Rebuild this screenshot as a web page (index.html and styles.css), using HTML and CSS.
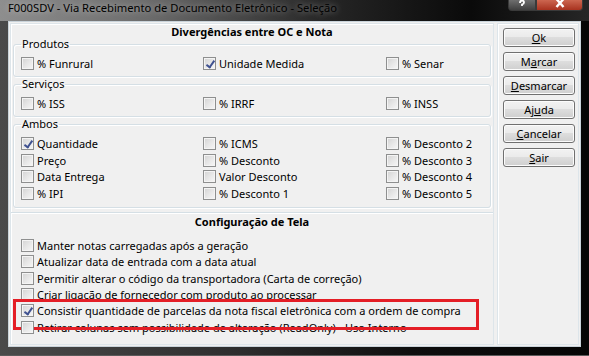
FILE: index.html
```html
<!DOCTYPE html>
<html lang="pt-BR">
<head>
    <meta charset="UTF-8">
    <title>F000SDV - Seleção</title>
    <link rel="stylesheet" href="styles.css">
</head>
<body>
    <div class="window">
        <div class="titlebar">
            <span class="title-text">F000SDV - Via Recebimento de Documento Eletrônico - Seleção</span>
            <div class="caption-buttons">
                <span class="cap-btn cap-help">
                    <svg width="8" height="8" viewBox="0 0 8 8"><path d="M2 3 Q2 0.5 4 0.5 Q6 0.5 6 2.5 Q6 4 4 4.5 L4 6" fill="none" stroke="#fff" stroke-width="1.8"/></svg>
                </span>
                <span class="cap-btn cap-close">
                    <svg width="12" height="8" viewBox="0 0 12 8"><path d="M2.5 -1 L9.5 7 M9.5 -1 L2.5 7" stroke="#fff" stroke-width="2.4"/></svg>
                </span>
            </div>
        </div>

        <div class="client">
            <div class="main-panel">
                <div class="section-title">Divergências entre OC e Nota</div>

                <fieldset class="group">
                    <legend>Produtos</legend>
                    <div class="grid">
                        <label class="check"><span class="box"></span>% Funrural</label>
                        <label class="check"><span class="box checked"></span>Unidade Medida</label>
                        <label class="check"><span class="box"></span>% Senar</label>
                    </div>
                </fieldset>

                <fieldset class="group">
                    <legend>Serviços</legend>
                    <div class="grid">
                        <label class="check"><span class="box"></span>% ISS</label>
                        <label class="check"><span class="box"></span>% IRRF</label>
                        <label class="check"><span class="box"></span>% INSS</label>
                    </div>
                </fieldset>

                <fieldset class="group group-ambos">
                    <legend>Ambos</legend>
                    <div class="grid">
                        <label class="check"><span class="box checked"></span>Quantidade</label>
                        <label class="check"><span class="box"></span>% ICMS</label>
                        <label class="check"><span class="box"></span>% Desconto 2</label>
                        <label class="check"><span class="box"></span>Preço</label>
                        <label class="check"><span class="box"></span>% Desconto</label>
                        <label class="check"><span class="box"></span>% Desconto 3</label>
                        <label class="check"><span class="box"></span>Data Entrega</label>
                        <label class="check"><span class="box"></span>Valor Desconto</label>
                        <label class="check"><span class="box"></span>% Desconto 4</label>
                        <label class="check"><span class="box"></span>% IPI</label>
                        <label class="check"><span class="box"></span>% Desconto 1</label>
                        <label class="check"><span class="box"></span>% Desconto 5</label>
                    </div>
                </fieldset>

                <div class="config">
                    <div class="section-title config-title">Configuração de Tela</div>
                    <div class="config-list">
                        <label class="check"><span class="box"></span>Manter notas carregadas após a geração</label>
                        <label class="check"><span class="box"></span>Atualizar data de entrada com a data atual</label>
                        <label class="check"><span class="box"></span>Permitir alterar o código da transportadora (Carta de correção)</label>
                        <label class="check"><span class="box"></span>Criar ligação de fornecedor com produto ao processar</label>
                        <label class="check highlight"><span class="box checked"></span>Consistir quantidade de parcelas da nota fiscal eletrônica com a ordem de compra</label>
                        <label class="check"><span class="box"></span>Retirar colunas sem possibilidade de alteração (ReadOnly) - Uso Interno</label>
                    </div>
                </div>
            </div>

            <div class="side-panel">
                <button class="btn"><u>O</u>k</button>
                <button class="btn">M<u>a</u>rcar</button>
                <button class="btn"><u>D</u>esmarcar</button>
                <button class="btn">Aj<u>u</u>da</button>
                <button class="btn"><u>C</u>ancelar</button>
                <button class="btn"><u>S</u>air</button>
            </div>
        </div>
    </div>
</body>
</html>
```

FILE: styles.css
```css
* {
    margin: 0;
    padding: 0;
    box-sizing: border-box;
}

body {
    font-family: 'Noto Sans', 'Open Sans', sans-serif;
    font-size: 11px;
    color: #000;
    background: #000;
}

.window {
    width: 589px;
    height: 356px;
    display: flex;
    flex-direction: column;
    background: linear-gradient(90deg, #4a4a4a 0%, #2e2e2e 40%, #0e0e0e 70%, #050505 100%);
    padding: 0 8px 8px 8px;
    border-bottom: 1px solid #5a5a5a;
}

/* barra de título */
.titlebar {
    height: 21px;
    flex: none;
    display: flex;
    align-items: flex-start;
    justify-content: space-between;
    margin: 0 -8px;
    padding: 0 6px 0 8px;
    background: linear-gradient(90deg, #8e8e8e 0%, #6c6c6c 25%, #262626 55%, #0a0a0a 80%, #262626 100%);
}

.title-text {
    color: #000;
    font-size: 11.2px;
    line-height: 14px;
    padding-top: 1px;
    text-shadow: 0 0 6px rgba(255, 255, 255, 0.5);
    white-space: nowrap;
}

.caption-buttons {
    display: flex;
}

.cap-btn {
    height: 11px;
    display: flex;
    align-items: flex-end;
    justify-content: center;
    border: 1px solid #3a3a3a;
    border-top: none;
    padding-bottom: 2px;
}

.cap-help {
    width: 28px;
    border-radius: 0 0 0 4px;
    background: linear-gradient(#6e6e6e, #404040);
}

.cap-close {
    width: 47px;
    border-radius: 0 0 4px 0;
    background: linear-gradient(#cc6650, #a8321f);
}

/* área cliente */
.client {
    flex: 1;
    display: flex;
    gap: 3px;
    padding: 1px;
    background: #f0f0f0;
    border: 1px solid #c9d3da;
}

.main-panel {
    width: 484px;
    display: flex;
    flex-direction: column;
    border: 1px solid #dde5ea;
    box-shadow: inset 1px 1px 0 #ffffff;
    padding: 0 2px 1px 2px;
}

.section-title {
    text-align: center;
    font-weight: bold;
    height: 14px;
    line-height: 15px;
}

.group {
    border: 1px solid #d5dfe5;
    border-radius: 3px;
    box-shadow: inset 1px 1px 0 #ffffff, 1px 1px 0 #ffffff;
    margin-top: 1px;
    padding: 7px 0 6px 7px;
}

.section-title + .group {
    margin-top: 0;
}

.group legend {
    padding: 0 1px;
    line-height: 12px;
    height: 12px;
}

.group-ambos {
    padding-bottom: 7px;
}

.grid {
    display: grid;
    grid-template-columns: 182px 183px 1fr;
    row-gap: 3.7px;
}

.check {
    display: flex;
    align-items: center;
    gap: 3px;
    height: 13px;
    line-height: 13px;
    white-space: nowrap;
}

.box {
    width: 13px;
    height: 13px;
    flex: none;
    border: 1px solid #8e8f8f;
    background: linear-gradient(135deg, #d3d3d3 0%, #e8e8e8 55%, #f7f7f7 100%);
    box-shadow: inset 0 0 0 1px #f4f4f4;
    position: relative;
}

.box.checked::after {
    content: '';
    position: absolute;
    left: 4px;
    top: 1px;
    width: 3px;
    height: 7px;
    border: solid #3f5190;
    border-width: 0 2px 2px 0;
    transform: rotate(35deg);
}

.config {
    flex: 1;
    margin: 4px -2px 0 -2px;
    padding: 0 2px;
    border-top: 1px solid #d5dfe5;
    box-shadow: inset 0 1px 0 #ffffff;
}

.config-title {
    height: 18px;
    line-height: 18px;
}

.config-list {
    display: flex;
    flex-direction: column;
    gap: 3.3px;
    padding: 8px 0 0 8px;
}

.highlight {
    position: relative;
}

.highlight::after {
    content: '';
    position: absolute;
    left: -8px;
    top: -5px;
    width: 460px;
    height: 25px;
    border: 3px solid #e41e26;
}

/* botões */
.side-panel {
    flex: 1;
    display: flex;
    flex-direction: column;
    gap: 5px;
    padding: 4px 3px 0 5px;
    border: 1px solid #dde5ea;
    box-shadow: inset 1px 1px 0 #ffffff;
}

.btn {
    height: 19px;
    border: 1px solid #707070;
    border-radius: 3px;
    background: linear-gradient(#f2f2f2 0%, #ebebeb 45%, #dddddd 50%, #cfcfcf 100%);
    box-shadow: inset 0 0 0 1px #fcfcfc;
    font-family: inherit;
    font-size: 11px;
    color: #000;
    line-height: 16px;
}
```
